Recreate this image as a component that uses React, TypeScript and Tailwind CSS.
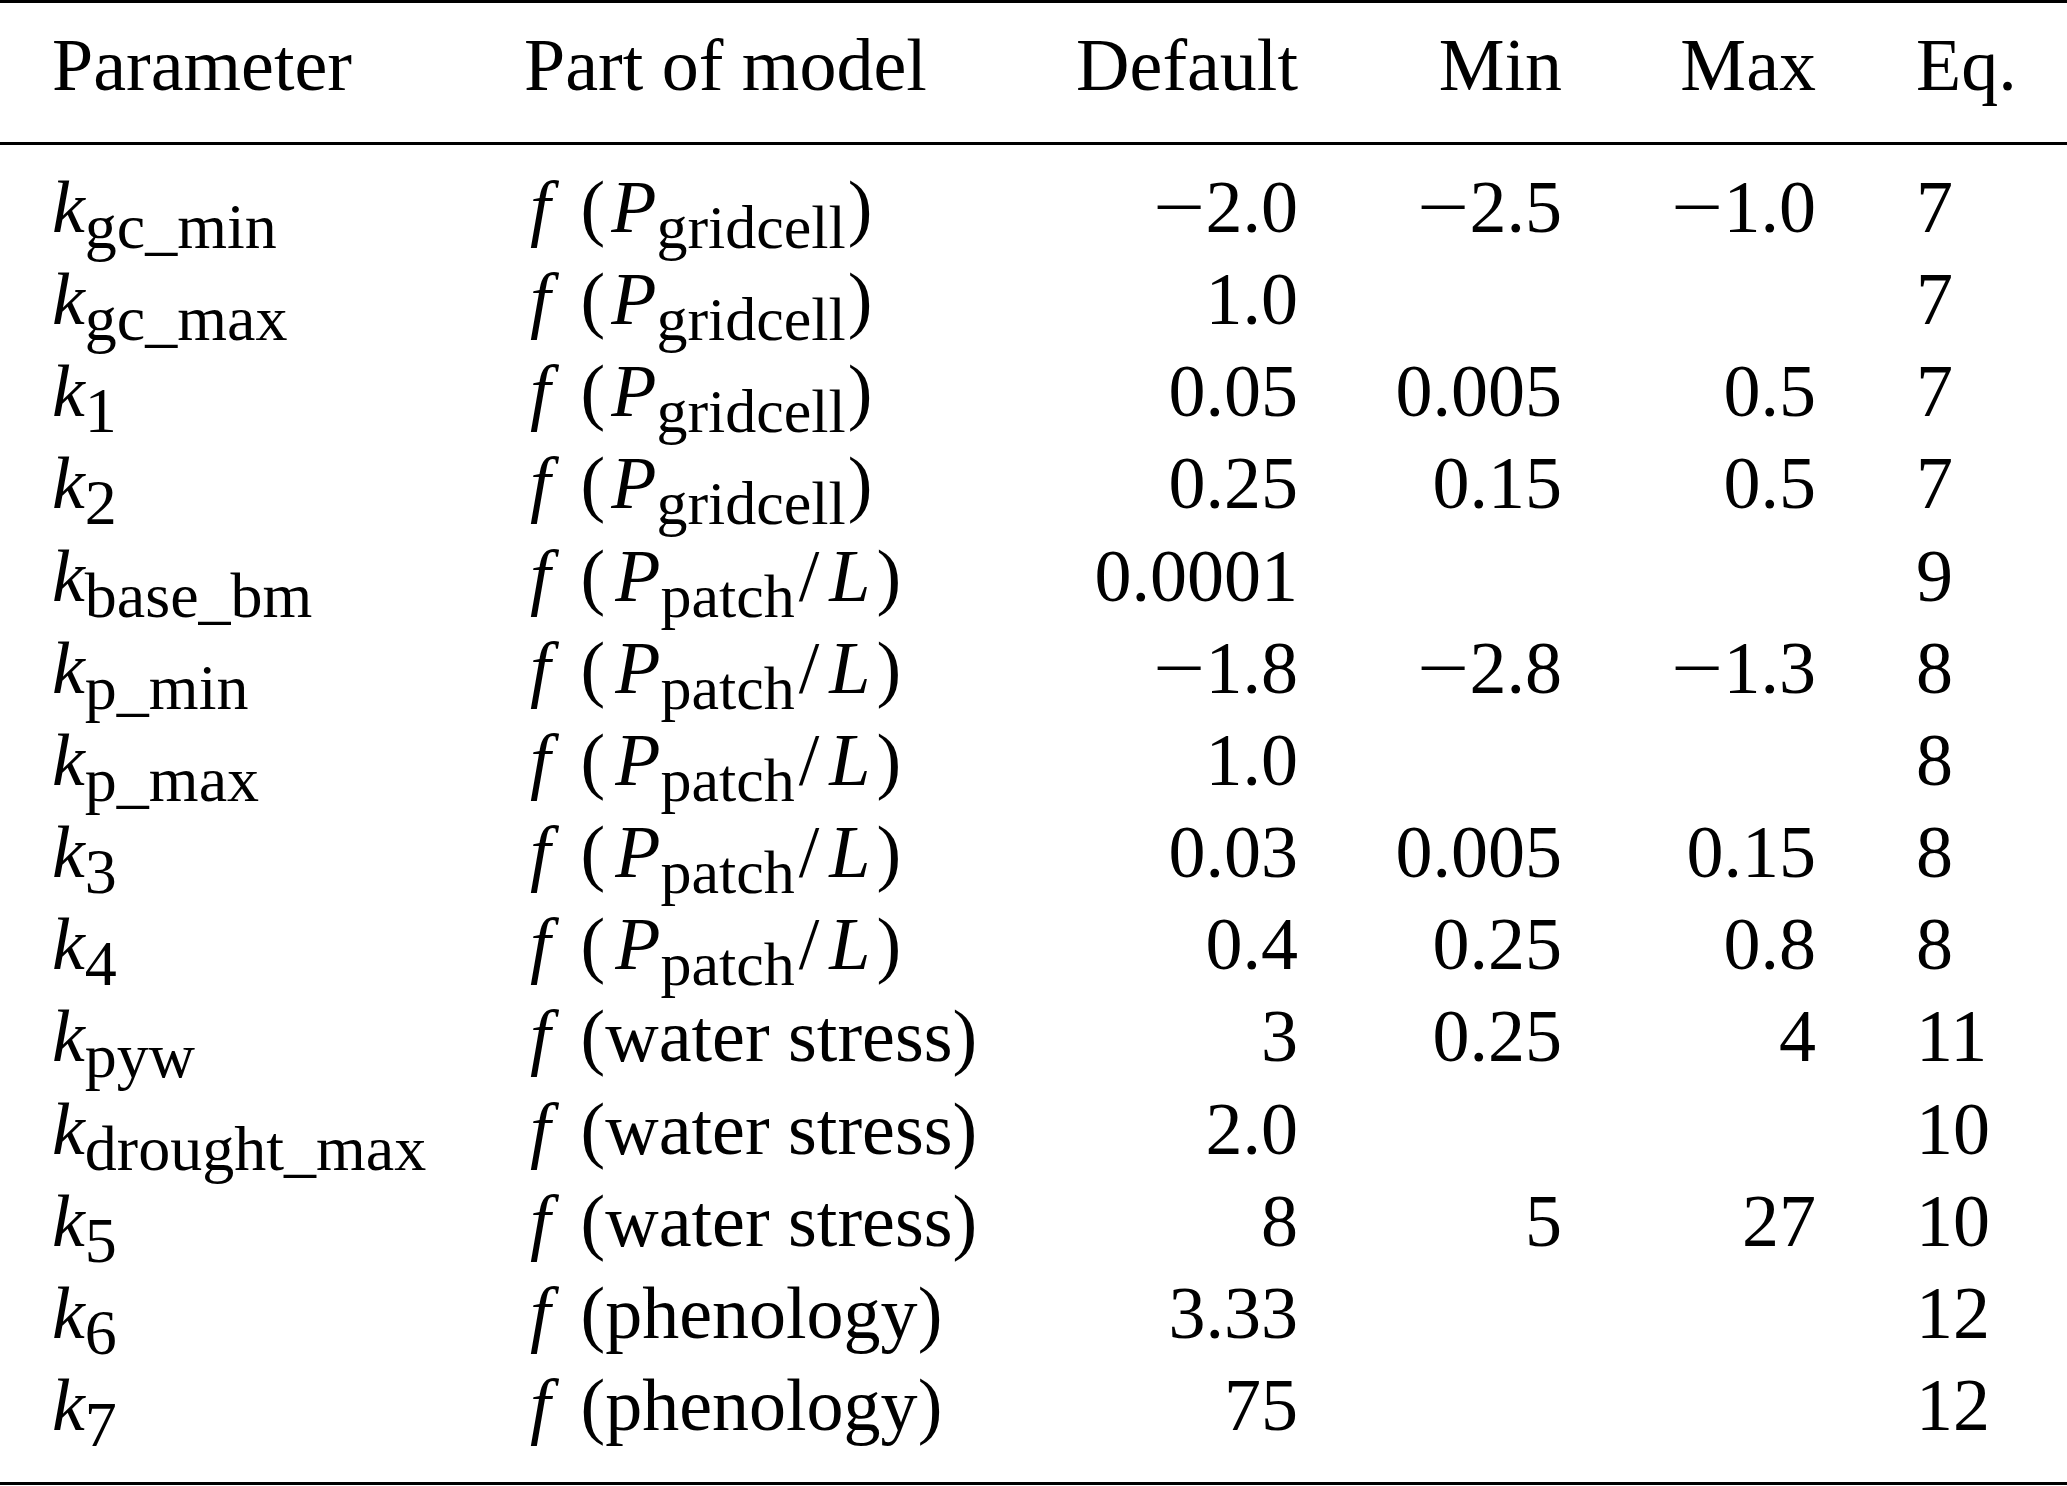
import React from 'react'

type Arg = 'gridcell' | 'patch' | 'water' | 'phen'

interface Row {
  sub: string
  arg: Arg
  def: string
  min?: string
  max?: string
  eq: string
}

const rows: Row[] = [
  { sub: 'gc_min', arg: 'gridcell', def: '−2.0', min: '−2.5', max: '−1.0', eq: '7' },
  { sub: 'gc_max', arg: 'gridcell', def: '1.0', eq: '7' },
  { sub: '1', arg: 'gridcell', def: '0.05', min: '0.005', max: '0.5', eq: '7' },
  { sub: '2', arg: 'gridcell', def: '0.25', min: '0.15', max: '0.5', eq: '7' },
  { sub: 'base_bm', arg: 'patch', def: '0.0001', eq: '9' },
  { sub: 'p_min', arg: 'patch', def: '−1.8', min: '−2.8', max: '−1.3', eq: '8' },
  { sub: 'p_max', arg: 'patch', def: '1.0', eq: '8' },
  { sub: '3', arg: 'patch', def: '0.03', min: '0.005', max: '0.15', eq: '8' },
  { sub: '4', arg: 'patch', def: '0.4', min: '0.25', max: '0.8', eq: '8' },
  { sub: 'pyw', arg: 'water', def: '3', min: '0.25', max: '4', eq: '11' },
  { sub: 'drought_max', arg: 'water', def: '2.0', eq: '10' },
  { sub: '5', arg: 'water', def: '8', min: '5', max: '27', eq: '10' },
  { sub: '6', arg: 'phen', def: '3.33', eq: '12' },
  { sub: '7', arg: 'phen', def: '75', eq: '12' },
]

// subscript: same baseline shift everywhere, kept out of the line box
function Sub({ children, small }: { children: React.ReactNode; small?: boolean }) {
  return (
    <span className={`relative top-[16px] leading-none ${small ? 'text-[62px]' : 'text-[64px]'}`}>
      {children}
    </span>
  )
}

function Param({ sub }: { sub: string }) {
  return (
    <span>
      <i>k</i>
      <Sub>{sub}</Sub>
    </span>
  )
}

function Func({ arg }: { arg: Arg }) {
  let inner: React.ReactNode
  if (arg === 'gridcell') {
    inner = (
      <>
        <i className="ml-[6px]">P</i>
        <Sub small>gridcell</Sub>
      </>
    )
  } else if (arg === 'patch') {
    inner = (
      <>
        <i className="ml-[10px]">P</i>
        <Sub small>patch</Sub>
        <span className="ml-[4px]">/</span>
        <i className="ml-[10px]">L</i>
      </>
    )
  } else if (arg === 'water') {
    inner = 'water stress'
  } else {
    inner = 'phenology'
  }
  return (
    <span className="ml-[6px]">
      <i>f</i>
      <span className="ml-[30px]">(</span>
      {inner}
      <span className={arg === 'gridcell' ? 'ml-[2px]' : arg === 'patch' ? 'ml-[6px]' : ''}>)</span>
    </span>
  )
}

// numbers with a wider, LaTeX-style minus sign
function Num({ v }: { v?: string }) {
  if (!v) return null
  if (v.startsWith('−')) {
    return (
      <span>
        <span className="inline-block w-[53px] text-left">
          <span className="inline-block origin-left scale-x-[1.25]">−</span>
        </span>
        {v.slice(1)}
      </span>
    )
  }
  return <span>{v}</span>
}

const cols = 'grid grid-cols-[524px_536px_238px_264px_254px_1fr]'

export default function App() {
  return (
    <div className="w-[2067px] h-[1486px] bg-white text-black font-['Liberation_Serif','Times_New_Roman',serif] text-[74px] leading-[92px] overflow-hidden">
      <div className="border-t-[3px] border-black" />

      {/* header */}
      <div className={`${cols} pt-[16px] pb-[31px]`}>
        <div className="pl-[52px]">Parameter</div>
        <div>Part of model</div>
        <div className="text-right">Default</div>
        <div className="text-right">Min</div>
        <div className="text-right">Max</div>
        <div className="pl-[100px]">Eq.</div>
      </div>

      <div className="border-t-[3px] border-black" />

      {/* body */}
      <div className="pt-[16px] pb-[31px]">
        {rows.map((r, i) => (
          <div key={i} className={`${cols} leading-[92.15px] whitespace-nowrap`}>
            <div className="pl-[52px]">
              <Param sub={r.sub} />
            </div>
            <div>
              <Func arg={r.arg} />
            </div>
            <div className="text-right">
              <Num v={r.def} />
            </div>
            <div className="text-right">
              <Num v={r.min} />
            </div>
            <div className="text-right">
              <Num v={r.max} />
            </div>
            <div className="pl-[100px]">{r.eq}</div>
          </div>
        ))}
      </div>

      <div className="border-t-[3px] border-black" />
    </div>
  )
}
